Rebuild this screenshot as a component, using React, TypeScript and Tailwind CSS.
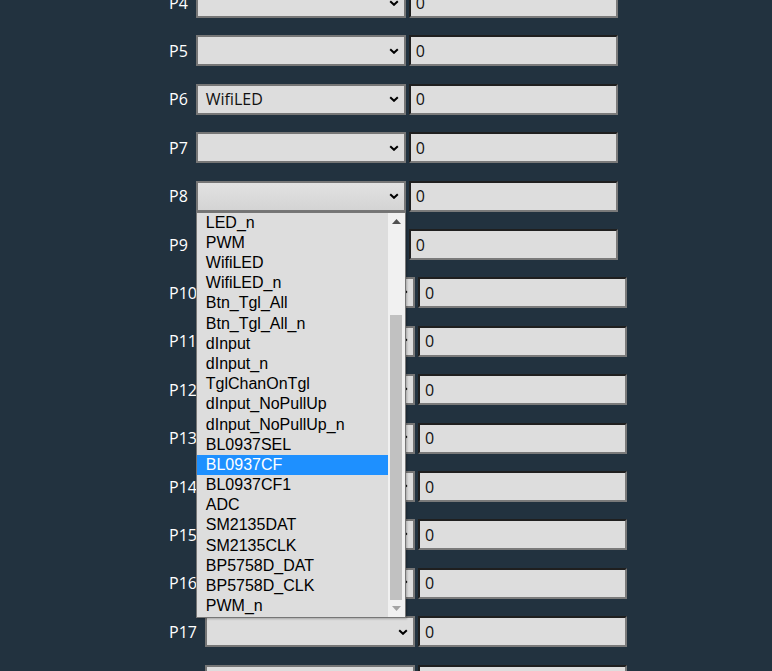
import React from 'react';

const pins = [
  { name: 'P4', role: '' },
  { name: 'P5', role: '' },
  { name: 'P6', role: 'WifiLED' },
  { name: 'P7', role: '' },
  { name: 'P8', role: '', open: true },
  { name: 'P9', role: '' },
  { name: 'P10', role: '' },
  { name: 'P11', role: '' },
  { name: 'P12', role: '' },
  { name: 'P13', role: '' },
  { name: 'P14', role: '' },
  { name: 'P15', role: '' },
  { name: 'P16', role: '' },
  { name: 'P17', role: '' },
  { name: 'P18', role: '' },
];

const options = [
  'LED_n',
  'PWM',
  'WifiLED',
  'WifiLED_n',
  'Btn_Tgl_All',
  'Btn_Tgl_All_n',
  'dInput',
  'dInput_n',
  'TglChanOnTgl',
  'dInput_NoPullUp',
  'dInput_NoPullUp_n',
  'BL0937SEL',
  'BL0937CF',
  'BL0937CF1',
  'ADC',
  'SM2135DAT',
  'SM2135CLK',
  'BP5758D_DAT',
  'BP5758D_CLK',
  'PWM_n',
];

function Chevron() {
  return (
    <svg className="w-[10px] h-[6px]" viewBox="0 0 10 6" fill="none">
      <path d="M1.2 1.2L5 4.8L8.8 1.2" stroke="#000" strokeWidth={2} />
    </svg>
  );
}

function OptionList() {
  return (
    <div className="absolute left-0 top-[31px] z-10 w-[210px] h-[406px] bg-[#dddddd] border border-[#767676] flex shadow-[1px_1px_2px_rgba(0,0,0,0.25)]">
      <div className="flex-1 flex flex-col font-['Liberation_Sans',Arial,sans-serif] text-[16px] text-black">
        {options.map((o) => (
          <div
            key={o}
            className={
              o === 'BL0937CF'
                ? 'h-[20.2px] leading-[20.2px] pl-[9px] bg-[#1e90ff] text-white'
                : 'h-[20.2px] leading-[20.2px] pl-[9px]'
            }
          >
            {o}
          </div>
        ))}
      </div>
      <div className="w-[17px] bg-[#f1f1f1] flex flex-col items-center">
        <div className="h-[17px] flex items-center justify-center">
          <svg className="w-[9px] h-[5px]" viewBox="0 0 9 5">
            <path d="M0 5L4.5 0L9 5Z" fill="#505050" />
          </svg>
        </div>
        <div className="h-[85px]" />
        <div className="w-[12px] h-[285px] bg-[#c1c1c1]" />
        <div className="flex-1 flex items-center justify-center">
          <svg className="w-[9px] h-[5px]" viewBox="0 0 9 5">
            <path d="M0 0L9 0L4.5 5Z" fill="#a3a3a3" />
          </svg>
        </div>
      </div>
    </div>
  );
}

export default function App() {
  return (
    <div className="min-h-[671px] h-[671px] overflow-hidden bg-[#22323f] font-['Open_Sans','Noto_Sans',sans-serif]">
      <div className="pl-[169px] -mt-[13px] flex flex-col">
        {pins.map((p) => (
          <div key={p.name} className="h-[48.42px] flex items-start shrink-0">
            <div className="h-[31px] flex items-center text-white text-[16px] pr-[8px]">{p.name}</div>
            <div className="relative">
              <div
                className={
                  p.open
                    ? 'w-[210px] h-[31px] border-2 border-[#767676] bg-gradient-to-b from-[#e2e2e2] to-[#d4d4d4] flex items-center pl-[8px] pr-[5px] text-[16px] text-[#111]'
                    : 'w-[210px] h-[31px] border-2 border-[#767676] bg-[#dddddd] flex items-center pl-[8px] pr-[5px] text-[16px] text-[#111]'
                }
              >
                <span className="flex-1">{p.role}</span>
                <Chevron />
              </div>
              {p.open && <OptionList />}
            </div>
            <div className="ml-[3px] w-[209px] h-[31px] border-2 border-t-[#1f1f1f] border-l-[#1f1f1f] border-r-[#7a7a7a] border-b-[#7a7a7a] bg-[#dddddd] flex items-center pl-[5px] text-[16px] text-[#111]">
              0
            </div>
          </div>
        ))}
      </div>
    </div>
  );
}
